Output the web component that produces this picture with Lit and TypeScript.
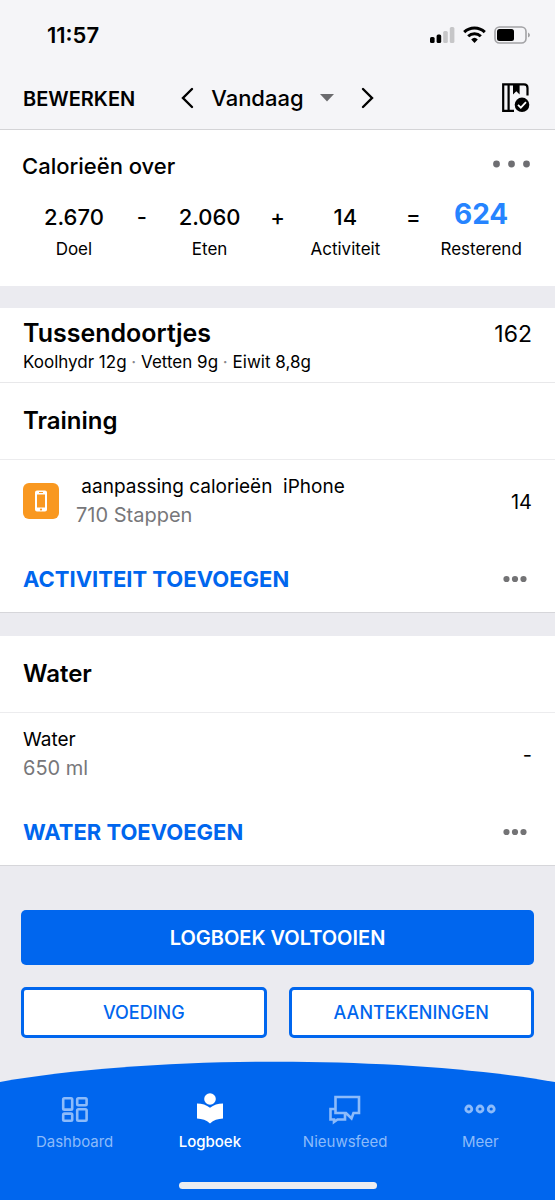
import { LitElement, html, css, svg } from "lit";
import { customElement, property } from "lit/decorators.js";

const moreDots = html`<svg width="24" height="8" viewBox="0 0 24 8" fill="#737375" aria-hidden="true">
  <circle cx="3.500" cy="4" r="3.100" /><circle cx="12" cy="4" r="3.100" /><circle cx="20.500" cy="4" r="3.100" />
</svg>`;

@customElement("diary-section")
export class DiarySection extends LitElement {
  @property() heading = "";
  @property() name = "";
  @property() detail = "";
  @property() amount = "";
  @property() action = "";
  @property({ type: Boolean }) device = false;

  static styles = css`
    :host { display: block; background: #fff; border-bottom: 1px solid #d6d6da; }
    h2 { margin: 0; padding: 22px 23px; font-size: 24px; line-height: 32px; font-weight: 600; border-bottom: 1px solid #ececee; }
    .entry { display: flex; align-items: center; gap: 17px; padding: 13px 23px; }
    .icon { flex: none; display: block; }
    .text { flex: 1; min-width: 0; line-height: 28px; }
    .name { margin: 0; white-space: pre; font-size: 19px; }
    .detail { margin: 0; color: #77777a; font-size: 20px; }
    .amount { font-size: 20px; line-height: 32px; padding-top: 2px; }
    .actions { display: flex; align-items: center; justify-content: space-between; padding: 21px 28px 17px 23px; }
    button { font: inherit; border: 0; background: none; padding: 0; color: #0066ee; cursor: pointer; }
    .add { font-size: 22px; line-height: 32px; font-weight: 700; }
    .more { display: flex; }
  `;

  render() {
    return html`
      <h2>${this.heading}</h2>
      <div class="entry">
        ${this.device
          ? html`<svg class="icon" width="36" height="36" viewBox="0 0 36 36" aria-hidden="true">
              <rect width="36" height="36" rx="6" fill="#f99820" />
              <path fill="#fff" fill-rule="evenodd" d="M14 7.500h8a2 2 0 0 1 2 2v17a2 2 0 0 1-2 2h-8a2 2 0 0 1-2-2v-17a2 2 0 0 1 2-2zM14 11.500v13h8v-13zM16 9v.9h4V9zM18 25.600a1 1 0 1 0 .01 0z" />
            </svg>`
          : ""}
        <div class="text">
          <p class="name">${this.name}</p>
          <p class="detail">${this.detail}</p>
        </div>
        <span class="amount">${this.amount}</span>
      </div>
      <div class="actions">
        <button class="add">${this.action}</button>
        <button class="more" aria-label="Meer opties">${moreDots}</button>
      </div>
    `;
  }
}

const tabIcons = {
  dashboard: svg`<g fill="none" stroke="currentColor" stroke-width="2.600">
    <rect x="4.200" y="5.200" width="9" height="11.400" rx="1.200" /><rect x="18.200" y="5.200" width="9.400" height="7" rx="1.200" />
    <rect x="4.200" y="20.600" width="9" height="7.200" rx="1.200" /><rect x="18.200" y="16.200" width="9.400" height="11.600" rx="1.200" /></g>`,
  diary: svg`<g fill="currentColor"><circle cx="16" cy="6" r="5.800" />
    <path d="M3 10.500C8 10.500 12.500 12 16 14.800C19.500 12 24 10.500 29 10.500V25.500C24 25.800 19.500 27.200 16 30.500C12.500 27.200 8 25.800 3 25.500Z" /></g>`,
  news: svg`<path fill="none" stroke="currentColor" stroke-width="2.600" d="M6.500 4H30V20H24.500L22.500 25.500L17 20H6.500ZM6.500 16H1.500V26.500H5V29L8.500 26.500H16V20" />`,
  more: svg`<g fill="none" stroke="currentColor" stroke-width="2.800"><circle cx="4.800" cy="16" r="3" /><circle cx="16" cy="16" r="3" /><circle cx="27.200" cy="16" r="3" /></g>`,
};

@customElement("app-root")
export class AppRoot extends LitElement {
  static styles = css`
    :host { display: flex; flex-direction: column; min-height: 100vh; background: #ebebf0; color: #000; font-family: Inter, "Liberation Sans", sans-serif; }
    button { font: inherit; color: inherit; border: 0; background: none; padding: 0; cursor: pointer; }
    svg { display: block; }
    .top { background: #f5f5f8; border-bottom: 1px solid #d4d4d7; }
    .status { display: flex; justify-content: space-between; align-items: center; padding: 20px 24px 18px 47px; font-size: 22px; line-height: 30px; font-weight: 600; }
    .indicators { display: flex; align-items: center; gap: 8px; }
    .nav { display: flex; align-items: center; padding: 10px 25px 11px 23px; line-height: 40px; }
    .edit { font-size: 20px; font-weight: 600; padding-top: 2px; line-height: 38px; }
    .date { flex: 1; display: flex; align-items: center; padding-left: 45px; }
    .day { display: flex; align-items: center; gap: 16px; margin: 0 27px 0 17px; font-size: 22px; font-weight: 500; line-height: 40px; }
    .summary { background: #fff; padding-bottom: 25px; }
    .summary-head { display: flex; justify-content: space-between; align-items: center; padding: 20px 24px 14px 22px; }
    .summary-head button { padding-bottom: 4px; }
    h1 { margin: 0; font-size: 22px; line-height: 32px; font-weight: 500; }
    .sum { display: grid; grid-template-columns: 1fr 16px 1fr 16px 1fr 16px 1fr; padding: 0 14px; text-align: center; font-weight: 500; }
    .value, .op { font-size: 22px; line-height: 42px; }
    .caption { font-size: 17px; line-height: 23px; font-weight: 400; }
    .left { font-size: 28px; line-height: 36px; padding-bottom: 6px; font-weight: 700; color: #2684ff; }
    .meal { display: flex; justify-content: space-between; background: #fff; margin-top: 22px; padding: 9px 23px 6px; border-bottom: 1px solid #e8e8ea; }
    .meal h2 { margin: 0; font-size: 25px; line-height: 32px; font-weight: 600; }
    .meal p { margin: 0; font-size: 17px; line-height: 27px; }
    .meal .dot { color: #88888c; }
    .total { font-size: 23px; line-height: 34px; }
    .water { margin-top: 23px; }
    .buttons { display: grid; grid-template-columns: 1fr 1fr; gap: 22px; padding: 44px 21px 22px; }
    .complete { grid-column: 1 / -1; height: 55px; border-radius: 5px; background: #0066ee; color: #fff; font-size: 20px; font-weight: 600; }
    .secondary { height: 51px; border: 3px solid #0066ee; border-radius: 5px; background: #fff; color: #0066ee; font-size: 18px; font-weight: 500; }
    .tabbar { margin-top: auto; }
    .curve { width: 100%; height: 22px; color: #0066ee; }
    .tabs { display: grid; grid-template-columns: repeat(4, 1fr); padding: 10px 7px 30px; background: #0066ee; }
    .tab { display: flex; flex-direction: column; align-items: center; gap: 7px; color: #8cbbfa; text-decoration: none; font-size: 15px; line-height: 20px; font-weight: 400; }
    .tab.active { color: #fff; font-weight: 500; }
    .home { background: #0066ee; padding-bottom: 11px; }
    .home-bar { width: 198px; height: 7px; margin: 0 auto; border-radius: 4px; background: #ededf0; }
  `;

  private tab(label: string, icon: unknown, active = false) {
    return html`<a class="tab ${active ? "active" : ""}" href="#${label.toLowerCase()}">
      <svg width="32" height="32" viewBox="0 0 32 32" aria-hidden="true">${icon}</svg>${label}</a>`;
  }

  render() {
    return html`
      <header class="top">
        <div class="status">
          <span>11:57</span>
          <div class="indicators">
            <svg width="25" height="18" viewBox="0 0 25 18" aria-hidden="true">
              <rect x="0" y="11" width="4.600" height="6" rx="1.500" /><rect x="6.600" y="8.500" width="4.600" height="8.500" rx="1.500" />
              <rect x="13.200" y="5" width="4.600" height="12" rx="1.500" fill="#c6c6c8" /><rect x="19.800" y="1" width="4.600" height="16" rx="1.500" fill="#c6c6c8" />
            </svg>
            <svg width="23" height="18" viewBox="0 0 23 18" aria-hidden="true">
              <g fill="none" stroke="#000" stroke-width="3"><path d="M1.200 6.200a14.800 14.800 0 0 1 20.600 0" /><path d="M5.200 10.300a9 9 0 0 1 12.600 0" /></g>
              <path d="M8.200 13.400a4.800 4.800 0 0 1 6.600 0L11.500 17z" />
            </svg>
            <svg width="37" height="18" viewBox="0 0 37 18" aria-hidden="true">
              <rect x="1" y="1" width="31" height="16" rx="4.500" fill="none" stroke="#a2a2a5" stroke-width="1.600" />
              <rect x="3" y="3" width="17" height="12" rx="2.500" /><path d="M34 6.500q2 1 2 2.500t-2 2.500z" fill="#a2a2a5" />
            </svg>
          </div>
        </div>
        <nav class="nav">
          <button class="edit">BEWERKEN</button>
          <div class="date">
            <button aria-label="Vorige dag"><svg width="14" height="22" viewBox="0 0 14 22" fill="none" stroke="#000" stroke-width="2.400" stroke-linecap="round"><path d="M12 2L3 11L12 20" /></svg></button>
            <button class="day">Vandaag <svg width="14" height="8" viewBox="0 0 14 8" fill="#6b6b6e"><path d="M0 0H14L7 7.500Z" /></svg></button>
            <button aria-label="Volgende dag"><svg width="14" height="22" viewBox="0 0 14 22" fill="none" stroke="#000" stroke-width="2.400" stroke-linecap="round"><path d="M2 2L11 11L2 20" /></svg></button>
          </div>
          <button aria-label="Dagboek voltooien">
            <svg width="30" height="32" viewBox="0 0 30 32">
              <path fill="none" stroke="#000" stroke-width="2.200" d="M14 28.900H3.200V2.400H24Q27.500 2.400 27.500 5.900V13.500M8.600 2.400V28.900" />
              <path d="M13 2.400H19.600V12.500L16.300 9.200L13 12.500Z" />
              <circle cx="22" cy="22.800" r="7.300" /><path d="M18 22.800L20.800 25.600L26 20.100" fill="none" stroke="#fff" stroke-width="1.800" />
            </svg>
          </button>
        </nav>
      </header>
      <section class="summary">
        <div class="summary-head">
          <h1>Calorieën over</h1>
          <button aria-label="Meer opties"><svg width="40" height="8" viewBox="0 0 40 8" fill="#6e6e72"><circle cx="5.500" cy="4" r="3.400" /><circle cx="20.500" cy="4" r="3.400" /><circle cx="35.500" cy="4" r="3.400" /></svg></button>
        </div>
        <div class="sum">
          <div><div class="value">2.670</div><div class="caption">Doel</div></div>
          <div class="op">-</div>
          <div><div class="value">2.060</div><div class="caption">Eten</div></div>
          <div class="op">+</div>
          <div><div class="value">14</div><div class="caption">Activiteit</div></div>
          <div class="op">=</div>
          <div><div class="left">624</div><div class="caption">Resterend</div></div>
        </div>
      </section>
      <section class="meal">
        <div><h2>Tussendoortjes</h2><p>Koolhydr 12g <span class="dot">·</span> Vetten 9g <span class="dot">·</span> Eiwit 8,8g</p></div>
        <span class="total">162</span>
      </section>
      <diary-section heading="Training" .name=${" aanpassing calorieën  iPhone"} detail="710 Stappen" amount="14" action="ACTIVITEIT TOEVOEGEN" device></diary-section>
      <diary-section class="water" heading="Water" name="Water" detail="650 ml" amount="-" action="WATER TOEVOEGEN"></diary-section>
      <div class="buttons">
        <button class="complete">LOGBOEK VOLTOOIEN</button>
        <button class="secondary">VOEDING</button>
        <button class="secondary">AANTEKENINGEN</button>
      </div>
      <footer class="tabbar">
        <svg class="curve" viewBox="0 0 100 22" preserveAspectRatio="none" fill="currentColor" aria-hidden="true"><path d="M0 22V21C28 -6 72 -6 100 21V22Z" /></svg>
        <nav class="tabs">
          ${this.tab("Dashboard", tabIcons.dashboard)} ${this.tab("Logboek", tabIcons.diary, true)}
          ${this.tab("Nieuwsfeed", tabIcons.news)} ${this.tab("Meer", tabIcons.more)}
        </nav>
        <div class="home"><div class="home-bar"></div></div>
      </footer>
    `;
  }
}
